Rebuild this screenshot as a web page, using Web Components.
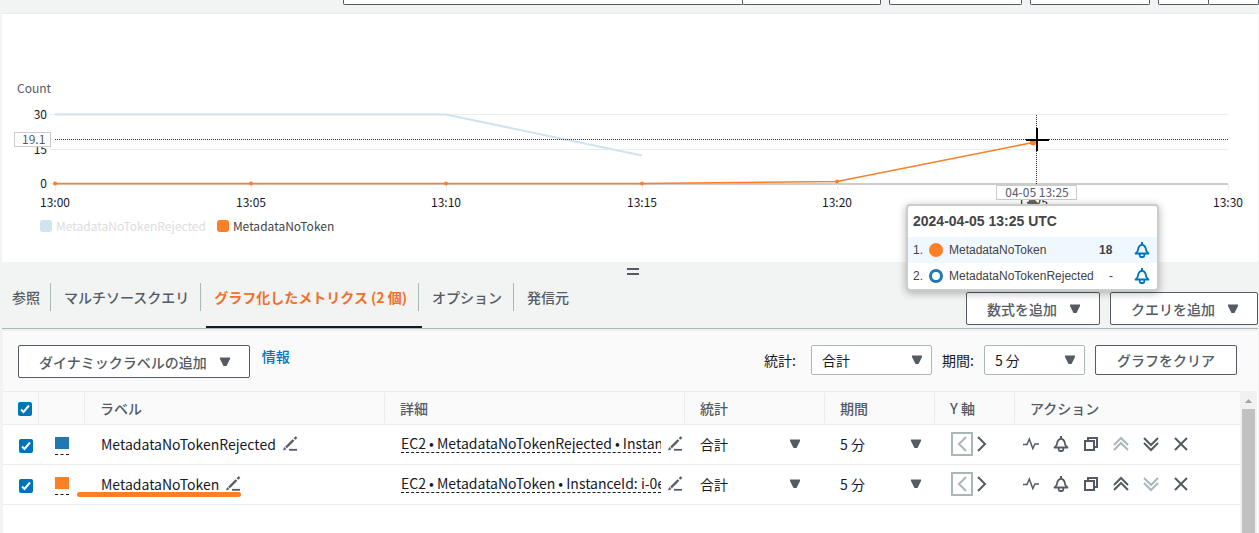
<!DOCTYPE html>
<html lang="ja">
<head>
<meta charset="utf-8">
<title>CloudWatch メトリクス</title>
<style>
html, body { height: 100%; }
body { margin: 0; background: #f2f3f3; color: #16191f; font: 14px/20px "Noto Sans CJK JP", "Noto Sans", sans-serif; overflow: hidden; }
</style>
</head>
<body>
<metrics-app></metrics-app>
<script>
const define = (name, html, setup) => {
  const template = document.createElement('template');
  template.innerHTML = html;
  customElements.define(name, class extends HTMLElement {
    connectedCallback() {
      if (this.shadowRoot) return;
      this.attachShadow({ mode: 'open' }).append(template.content.cloneNode(true));
      if (setup) setup.call(this, this.shadowRoot);
    }
  });
};

const ICONS = {
  caret: '<path d="M3 3.500h10v1.500L9.500 12h-3L3 5z" fill="currentColor" stroke="none"/>',
  pencil: '<path d="M4 11.500L11.500 4" stroke-width="2.400"/><path d="M12.500 3L14.500 1" stroke-width="2.400"/><path d="M1 14.500l1.200-3.500 2.300 2.300z" fill="currentColor" stroke="none"/><path d="M7 13.800H15" stroke-width="1.800"/>',
  left: '<path d="M12 1L5 8l7 7"/>',
  right: '<path d="M5 1l7 7-7 7"/>',
  pulse: '<path d="M0 8.500h4L6.300 3l3.500 9.500L12 8h4" stroke-width="1.500"/>',
  bell: '<path d="M1.500 11.500h13L12.300 9C12 8 12 7.500 11.600 6 11 3.800 9.800 2.800 8 2.800S5 3.800 4.400 6C4 7.500 4 8 3.700 9z" stroke-width="1.800" stroke-linejoin="round"/><path d="M8 3V0" stroke-width="2"/><path d="M5.700 12v1.500q0 1.500 1.300 1.500h2q1.300 0 1.300-1.500V12" stroke-width="1.800"/>',
  copy: '<path d="M2 5h9v9H2z"/><path d="M5 5V2h9v9h-3"/>',
  up: '<path d="M1 9l7-7 7 7M1 14l7-7 7 7"/>',
  down: '<path d="M1 2l7 7 7-7M1 7l7 7 7-7"/>',
  close: '<path d="M2 2l12 12M14 2L2 14"/>'
};
define('ui-icon', `<style>
:host { display: inline-block; width: 16px; height: 16px; flex: none; }
svg { display: block; width: 100%; height: 100%; fill: none; stroke: currentColor; stroke-width: 2; }
</style><svg viewBox="0 0 16 16" aria-hidden="true"></svg>`, function (root) {
  root.querySelector('svg').innerHTML = ICONS[this.getAttribute('name')];
});

define('ui-button', `<style>
:host { display: inline-block; }
button { display: flex; align-items: center; justify-content: center; gap: 10px; width: 100%; height: var(--h, 33px); padding: 0 21px; border: 1px solid #545b64; border-radius: 2px; background: #fff; color: #545b64; font: inherit; font-weight: 500; white-space: nowrap; }
:host([menu]) button { padding: 0 16px 0 20px; }
ui-icon { display: none; }
:host([menu]) ui-icon { display: block; }
</style><button type="button"><slot></slot><ui-icon name="caret"></ui-icon></button>`);

define('icon-button', `<style>
:host { display: inline-flex; color: #545b64; }
:host([disabled]) { color: #aab7b8; }
button { display: flex; align-items: center; justify-content: center; width: 16px; height: 24px; padding: 0; border: 0; background: none; color: inherit; }
:host([boxed]) button { width: 22px; border: 2px solid #aab7b8; }
</style><button type="button"></button>`, function (root) {
  const button = root.querySelector('button');
  button.innerHTML = `<ui-icon name="${this.getAttribute('icon')}"></ui-icon>`;
  button.setAttribute('aria-label', this.getAttribute('label') || '');
  button.disabled = this.hasAttribute('disabled');
});

define('ui-select', `<style>
:host { display: block; }
label { display: flex; align-items: center; gap: var(--gap, 10px); }
.box { display: grid; flex: 1; align-items: center; }
select, ui-icon { grid-area: 1 / 1; }
select { appearance: none; width: 100%; height: 30px; padding: 0 10px; border: 1px solid #aab7b8; border-radius: 2px; background: #fff; color: #16191f; font: inherit; }
ui-icon { justify-self: end; margin-right: 7px; color: #545b64; pointer-events: none; }
:host([plain]) { --gap: 0; }
:host([plain]) select { height: 24px; border: 0; padding: 0; background: none; }
:host([plain]) ui-icon { margin-right: 0; }
</style><label><slot></slot><span class="box"><select></select><ui-icon name="caret"></ui-icon></span></label>`, function (root) {
  const select = root.querySelector('select');
  select.add(new Option(this.getAttribute('value')));
  if (this.hasAttribute('plain')) select.setAttribute('aria-label', this.getAttribute('label'));
});

define('ui-check', `<style>
:host { display: block; width: 14px; height: 14px; }
input { appearance: none; display: block; width: 14px; height: 14px; margin: 0; border-radius: 2px; background: #0073bb; }
label { display: grid; }
input, svg { grid-area: 1 / 1; }
svg { fill: none; stroke: #fff; stroke-width: 2; pointer-events: none; }
</style><label><input type="checkbox" checked><svg width="14" height="14" viewBox="0 0 14 14"><path d="M3 7.500L5.500 10 11 3.500"/></svg></label>`, function (root) {
  root.querySelector('input').setAttribute('aria-label', this.getAttribute('label'));
});

define('top-bar', `<style>
:host { display: flex; justify-content: flex-end; gap: 8px; height: 13px; margin-right: -1px; }
.group { display: flex; }
.group div { box-sizing: border-box; height: 5px; border: 1px solid #545b64; border-top: 0; background: #fff; border-radius: 0 0 2px 2px; }
.group div + div { margin-left: -1px; }
.w1 { width: 400px; } .w2 { width: 139px; } .w3 { width: 133px; } .w4 { width: 120px; } .w5 { width: 51px; }
</style>
<div class="group"><div class="w1"></div><div class="w2"></div></div>
<div class="group"><div class="w3"></div></div>
<div class="group"><div class="w4"></div></div>
<div class="group"><div class="w5"></div><div class="w5"></div></div>`);

define('metric-chart', `<style>
:host { display: block; position: relative; box-sizing: border-box; height: 249px; border-top: 1px solid #eaeded; background: #fff; }
.plot { display: block; width: 100%; height: 204px; overflow: visible; }
text { font-size: 12px; fill: #16191f; }
.muted { fill: #545b64; }
.grid { stroke: #eaeded; }
.dots { stroke: #333; stroke-dasharray: 1 1; }
.tag { fill: #fff; stroke: #ccc; }
.line { fill: none; stroke: #ff7f27; stroke-width: 1.500; }
.legend { display: flex; gap: 11px; margin-left: 38px; font-size: 12px; line-height: 16px; color: #444; }
.item { display: flex; align-items: center; gap: 4px; }
.item i { width: 12px; height: 12px; border-radius: 3px; background: #ff7f27; }
.off { color: #ddd; } .off i { background: #d0e3f0; }
slot { display: contents; }
</style>
<svg class="plot" role="img" aria-label="Count"></svg>
<div class="legend"><span class="item off"><i></i>MetadataNoTokenRejected</span><span class="item"><i></i>MetadataNoToken</span></div>
<slot></slot>`, function (root) {
  const svg = root.querySelector('svg');
  const draw = () => {
    const left = 53, right = this.clientWidth - 30, step = (right - left) / 6;
    const x = minute => Math.round(left + step * minute / 5);
    const y = value => Math.round(169 - value * 69 / 30);
    const points = list => list.map(([m, v]) => x(m) + ',' + (y(v) + .5)).join(' ');
    const hot = [[0, 0], [5, 0], [10, 0], [15, 0], [20, 1], [25, 18]];
    const times = ['13:00', '13:05', '13:10', '13:15', '13:20', '13:25', '13:30'];
    const cx = x(25) + 3;
    svg.innerHTML = `
      <text class="muted" x="15" y="79">Count</text>
      ${[30, 15, 0].map(v => `<path class="grid" d="M${left - 5} ${y(v) + .5}H${right}"/><text x="45" y="${y(v) + 5}" text-anchor="end">${v}</text>`).join('')}
      <path d="M${left} 170H${right}" stroke="#ccc" stroke-width="2"/>
      ${times.map((t, i) => `<path class="grid" d="M${x(i * 5) + .5} 170v6"/><text x="${x(i * 5)}" y="193" text-anchor="middle">${t}</text>`).join('')}
      <polyline points="${points([[0, 30], [10, 30], [15, 12.300]])}" fill="none" stroke="#d0e3f0" stroke-width="2"/>
      <polyline class="line" points="${points(hot)}"/>
      ${hot.map(([m, v]) => `<circle cx="${x(m)}" cy="${y(v) + .5}" r="${m === 25 ? 3 : 2}" fill="#ff7f27"/>`).join('')}
      <path class="dots" d="M${left} 125.500H${right}M${cx + .5} 101V170"/>
      <path d="M${cx - 5} 126h4" stroke="#0073bb" stroke-width="2"/>
      <path d="M${cx - 10} 126H${cx + 13}M${cx + 1} 114V137" stroke="#000" stroke-width="2"/>
      <rect class="tag" x="12.500" y="118.500" width="36" height="14"/><text class="muted" x="20" y="130">19.1</text>
      <rect class="tag" x="${cx - 39.500}" y="171.500" width="80" height="14"/><text class="muted" x="${cx + 1}" y="183" text-anchor="middle">04-05 13:25</text>
      <path d="M${cx - 9} 190l4-4h4l4 4z" fill="#666"/>`;
  };
  draw();
  new ResizeObserver(draw).observe(this);
});

define('chart-tooltip', `<style>
:host { position: absolute; top: 190px; right: 99px; z-index: 2; box-sizing: border-box; width: 253px; border: 2px solid #ccc; border-radius: 4px; background: #fff; box-shadow: 0 2px 8px rgba(0,0,0,.3); color: #444; font: 12px/26px "Liberation Sans", Arial, sans-serif; }
h2 { margin: 0; padding: 0 5px; font-size: 14px; line-height: 31px; }
.row { display: grid; grid-template-columns: 16px 14px 1fr 35px 16px; align-items: center; height: 26px; padding: 0 7px 0 5px; }
.row.on { background: #f0f8ff; }
i { box-sizing: border-box; width: 14px; height: 14px; border-radius: 50%; border: 3px solid #1f77b4; }
.on i { border-color: #ff7f27; background: #ff7f27; }
.name { padding-left: 6px; white-space: nowrap; }
.value { font-weight: 700; }
.none { padding-left: 10px; font-weight: 400; }
.row icon-button { color: #0073bb; }
</style>
<h2>2024-04-05 13:25 UTC</h2>
<div class="row on"><span>1.</span><i></i><span class="name">MetadataNoToken</span><span class="value">18</span><icon-button icon="bell" label="アラームを作成"></icon-button></div>
<div class="row"><span>2.</span><i></i><span class="name">MetadataNoTokenRejected</span><span class="value none">-</span><icon-button icon="bell" label="アラームを作成"></icon-button></div>`);

define('split-handle', `<style>
:host { display: flex; justify-content: center; height: 20px; padding-top: 6px; box-sizing: border-box; }
div { width: 12px; height: 3px; border: solid #545b64; border-width: 2px 0; margin-left: 6px; }
</style><div></div>`);

define('tab-strip', `<style>
:host { display: flex; justify-content: space-between; height: 46px; border-bottom: 1px solid #aab7b8; }
nav { display: flex; }
button { position: relative; height: 28px; margin: 1px 0 0; padding: 0 11px 0 13px; border: 0; border-right: 1px solid #aab7b8; background: none; color: #545b64; font: inherit; font-weight: 500; white-space: nowrap; }
button:first-child { padding: 0 10px; }
button:last-child { border: 0; }
button[aria-selected=true] { color: #f2702a; font-weight: 600; }
button[aria-selected=true]::after { content: ""; position: absolute; left: 5px; right: -4px; top: 43px; height: 2px; background: #16191f; }
.actions { display: flex; gap: 10px; padding-top: 10px; }
</style>
<nav role="tablist">
<button role="tab">参照</button><button role="tab">マルチソースクエリ</button><button role="tab" aria-selected="true">グラフ化したメトリクス (2 個)</button><button role="tab">オプション</button><button role="tab">発信元</button>
</nav>
<div class="actions"><slot></slot></div>`);

define('tool-bar', `<style>
:host { display: flex; justify-content: space-between; box-sizing: border-box; height: 61px; padding: 14px 21px 0 15px; background: #fafafa; border-top: 1px solid #eaeded; }
div { display: flex; gap: 10px; }
.left { gap: 12px; }
a { color: #0073bb; font-weight: 500; text-decoration: none; line-height: 22px; }
.stat { width: 168px; --gap: 15px; } .period { width: 143px; }
.period, .stat { height: 30px; }
</style>
<div class="left"><ui-button menu>ダイナミックラベルの追加</ui-button><a href="#info">情報</a></div>
<div><ui-select class="stat" value="合計">統計:</ui-select><ui-select class="period" value="5 分">期間:</ui-select><ui-button style="--h:30px">グラフをクリア</ui-button></div>`);

define('metrics-table', `<style>
:host { display: block; }
table { width: 100%; table-layout: fixed; border-collapse: separate; border-spacing: 0; }
th, td { box-sizing: border-box; padding: 0 0 2px 16px; border-bottom: 1px solid #eaeded; text-align: left; vertical-align: middle; }
th { height: 34px; padding: 0 0 0 15px; border-top: 1px solid #eaeded; background: linear-gradient(#eaeded, #eaeded) right center / 1px 30px no-repeat #fafafa; color: #545b64; font-weight: 500; }
th:last-child { background: #fafafa; }
td { position: relative; height: 40px; background: #fff; }
th:first-child, td:first-child, td:nth-child(2) { padding-top: 2px; padding-bottom: 0; }
.c1 { width: 36px; } .c2 { width: 46px; } .c3, .c4 { width: 300px; } .c5 { width: 140px; } .c6 { width: 110px; } .c7 { width: 80px; }
.swatch { display: block; width: 14px; height: 12px; padding-bottom: 5px; background: var(--c) content-box; border-bottom: 1px dashed #16191f; }
.cell { display: flex; align-items: center; gap: 6px; }
.detail { width: 260px; overflow: hidden; white-space: nowrap; border-bottom: 1px dashed #16191f; line-height: 18px; }
.axis { display: flex; align-items: center; }
.acts { display: flex; gap: 14px; margin-left: -8px; }
td:nth-child(5) { padding-left: 15px; padding-right: 22px; }
td:nth-child(6) { padding-left: 15px; padding-right: 11px; }
.marked::after { content: ""; position: absolute; left: -8px; bottom: 7px; width: 164px; height: 5px; border-radius: 3px; background: #ff7f27; }
</style>
<table><colgroup><col class="c1"><col class="c2"><col class="c3"><col class="c4"><col class="c5"><col class="c6"><col class="c7"><col></colgroup>
<thead><tr><th><ui-check label="すべて選択"></ui-check></th><th></th><th>ラベル</th><th>詳細</th><th>統計</th><th>期間</th><th>Y 軸</th><th>アクション</th></tr></thead><tbody></tbody></table>`, function (root) {
  const rows = [
    { name: 'MetadataNoTokenRejected', detail: 'EC2 • MetadataNoTokenRejected • Instan', color: '#1f77b4', off: 'up' },
    { name: 'MetadataNoToken', detail: 'EC2 • MetadataNoToken • InstanceId: i-0e', color: '#ff7f27', off: 'down', marked: true }
  ];
  root.querySelector('tbody').innerHTML = rows.map(r => `<tr>
    <td><ui-check label="${r.name}"></ui-check></td>
    <td><span class="swatch" style="--c:${r.color}"></span></td>
    <td class="${r.marked ? 'marked' : ''}"><div class="cell"><span>${r.name}</span><icon-button icon="pencil" label="ラベルを編集"></icon-button></div></td>
    <td><div class="cell"><span class="detail">${r.detail}</span><icon-button icon="pencil" label="詳細を編集"></icon-button></div></td>
    <td><ui-select plain value="合計" label="統計"></ui-select></td>
    <td><ui-select plain value="5 分" label="期間"></ui-select></td>
    <td><div class="axis"><icon-button boxed disabled icon="left" label="左の Y 軸"></icon-button><icon-button icon="right" label="右の Y 軸"></icon-button></div></td>
    <td><div class="acts">${['pulse', 'bell', 'copy', 'up', 'down', 'close'].map(n => `<icon-button icon="${n}" label="${n}" ${n === r.off ? 'disabled' : ''}></icon-button>`).join('')}</div></td></tr>`).join('');
});

define('scroll-track', `<style>
:host { display: flex; flex-direction: column; align-items: center; width: 17px; background: #f1f1f1; }
svg { flex: none; }
div { flex: 1; width: 13px; background: #c1c1c1; }
</style><svg width="17" height="18"><path d="M5 12l3.500-4 3.500 4z" fill="#a3a3a3"/></svg><div></div>`);

define('metrics-app', `<style>
:host { display: flex; flex-direction: column; box-sizing: border-box; min-width: 1100px; height: 100vh; padding: 0 1px 0 2px; }
.panel { display: flex; flex: 1; flex-direction: column; margin: 1px 0 0 1px; background: #fff; }
.body { display: grid; flex: 1; grid-template-columns: 1fr 17px; padding-right: 1px; }
</style>
<top-bar></top-bar>
<metric-chart><chart-tooltip></chart-tooltip></metric-chart>
<split-handle></split-handle>
<tab-strip><ui-button menu>数式を追加</ui-button><ui-button menu>クエリを追加</ui-button></tab-strip>
<div class="panel"><tool-bar></tool-bar><div class="body"><metrics-table></metrics-table><scroll-track></scroll-track></div></div>`);
</script>
</body>
</html>
